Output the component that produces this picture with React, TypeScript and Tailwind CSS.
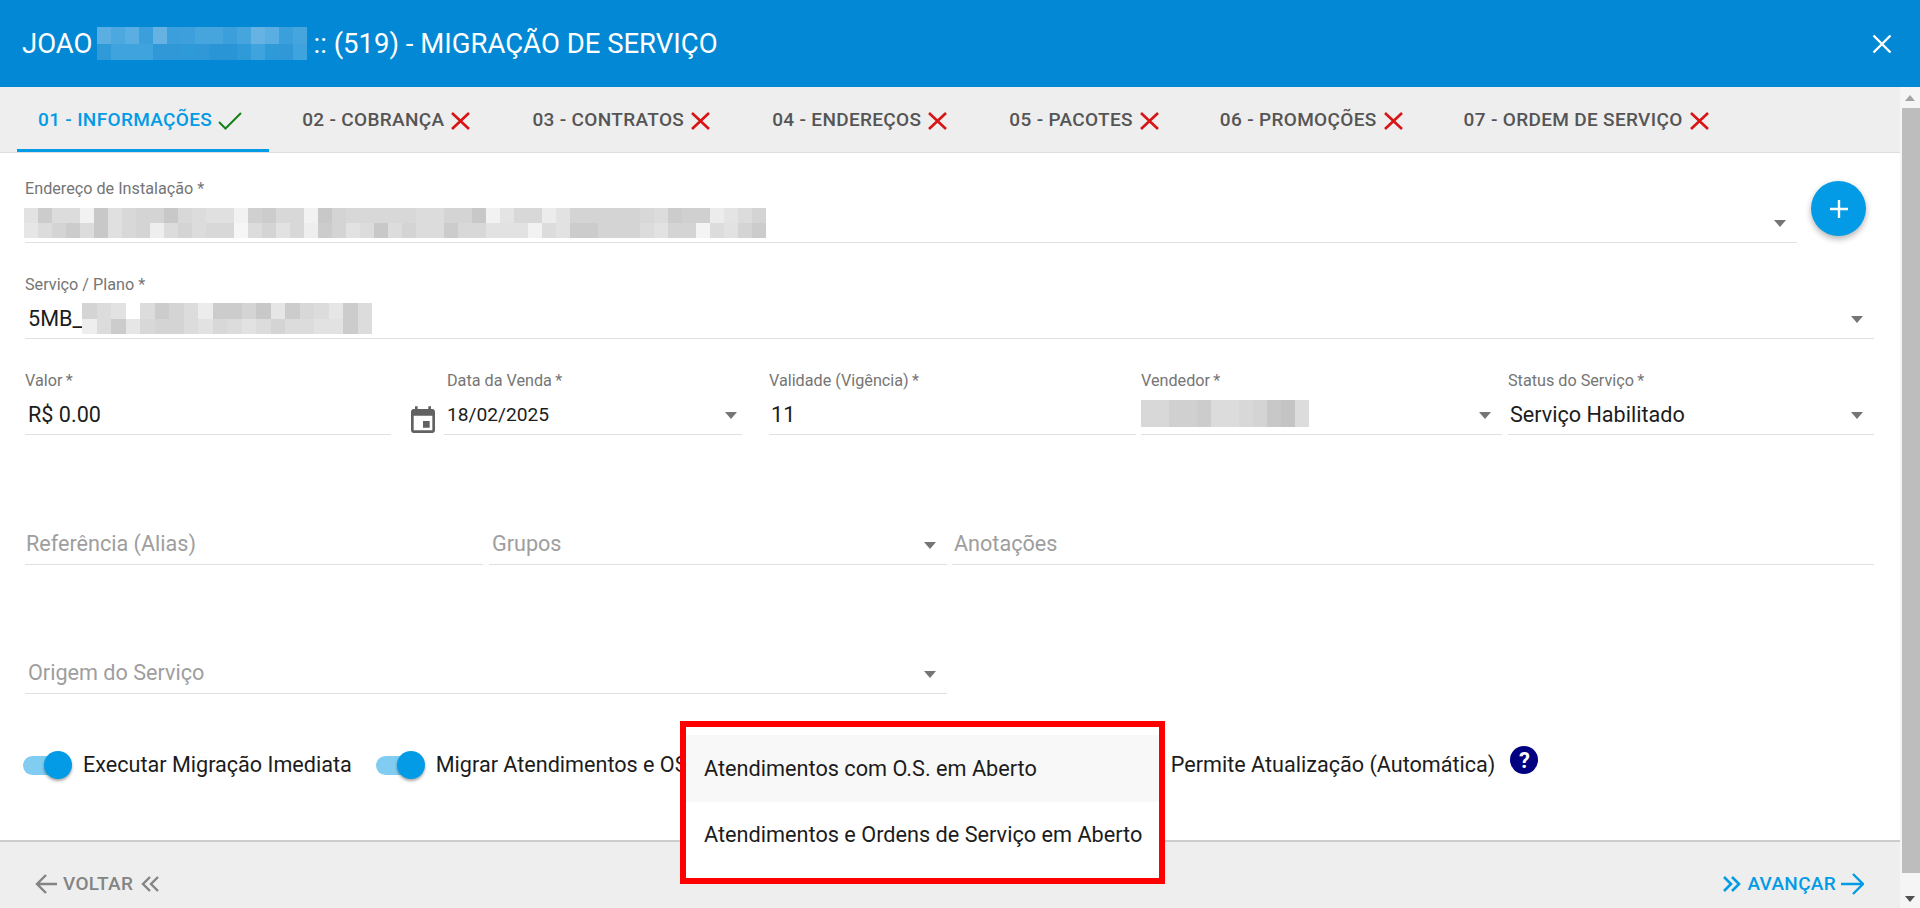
const tabs = [
  { label: '01 - INFORMAÇÕES', done: true, cls: 'ml-[17px] pl-[21px] pr-[27px] text-[#039be5] border-[#039be5]' },
  { label: '02 - COBRANÇA', done: false, cls: 'ml-[11px] pl-[22px] pr-[26px] text-[#555555] border-transparent' },
  { label: '03 - CONTRATOS', done: false, cls: 'ml-[14px] pl-[22px] pr-[26px] text-[#555555] border-transparent' },
  { label: '04 - ENDEREÇOS', done: false, cls: 'ml-[15px] pl-[21px] pr-[26px] text-[#555555] border-transparent' },
  { label: '05 - PACOTES', done: false, cls: 'ml-[14px] pl-[22px] pr-[26px] text-[#555555] border-transparent' },
  { label: '06 - PROMOÇÕES', done: false, cls: 'ml-[14px] pl-[21px] pr-[26px] text-[#555555] border-transparent' },
  { label: '07 - ORDEM DE SERVIÇO', done: false, cls: 'ml-[13px] pl-[22px] pr-[26px] text-[#555555] border-transparent' },
];

const titleMosaic = [
  '5aaee2 4ca8df 5aaee2 3b9fdb 66b3e3 3b9fdb 3da0dc 47a5de 47a5de 3b9fdb 47a5de 66b3e3 5aaee2 3b9fdb 47a5de',
  '2f9ad8 3fa3dd 3fa3dd 3fa3dd 3098d7 3098d7 2f9ad8 3098d7 2a95d6 2a95d6 2f9ad8 3fa3dd 2f9ad8 3098d7 3fa3dd',
];
const addressMosaic = [
  'e2 cc dc dc f2 c8 e0 d8 d4 d4 c8 d8 dc e0 e0 f2 d0 cc d8 d8 f2 c8 d4 d8 d8 d8 d8 d8 dc dc d4 d4 c8 f2 e4 d8 d8 ec e2 d4 d4 d4 d4 d4 d8 dc cc d0 d0 ec e4 dc d4',
  'e6 dc d4 cc dc c8 e0 d8 d4 ee dc d4 dc d8 d8 f6 dc d4 e2 d8 ee cc d4 e2 dc c8 dc d4 dc dc cc d8 d8 e2 e2 e2 f2 dc e2 cc cc d4 d4 d4 dc e2 d4 d4 f4 dc e2 d4 cc',
];
const planMosaic = [
  'd4 dc e2 ff dc cc d4 dc ec cc cc d4 c8 e6 cc d8 dc e6 cc dc',
  'ee dc cc e6 d8 d4 d4 dc e2 d8 dc e2 dc d4 dc dc e2 e2 cc dc',
];
const sellerMosaic = ['d8 d8 d0 d0 cc dc dc d8 d4 c8 c4 dc'];

function Mosaic({ rows, cell, height, gray = true }: { rows: string[]; cell: number; height: number; gray?: boolean }) {
  return (
    <div className="flex shrink-0 flex-col">
      {rows.map((row, i) => (
        <div className="flex" key={i}>
          {row.split(' ').map((c, j) => (
            <div
              key={j}
              style={{ width: cell, height, background: gray ? `#${c}${c}${c}` : `#${c}` }}
            />
          ))}
        </div>
      ))}
    </div>
  );
}

function Caret({ cls = 'mr-[11px]' }: { cls?: string }) {
  return (
    <svg className={`shrink-0 ${cls}`} width="12" height="7" viewBox="0 0 12 7">
      <path d="M0 0h12L6 7z" fill="#757575" />
    </svg>
  );
}

function Field({
  label,
  value,
  placeholder,
  caret,
  cls,
  labelCls = '',
  valueCls = 'pl-[3px]',
  caretCls,
  children,
}: {
  label?: string;
  value?: string;
  placeholder?: string;
  caret?: boolean;
  cls: string;
  labelCls?: string;
  valueCls?: string;
  caretCls?: string;
  children?: React.ReactNode;
}) {
  return (
    <div className={`flex h-[64px] shrink-0 flex-col border-b border-[#e0e0e0] ${cls}`}>
      <div className={`h-[20px] text-[16.2px] leading-[20px] text-[#757575] ${labelCls}`}>{label}</div>
      <div className="flex h-[43px] items-center pt-[5px]">
        <div className={`flex min-w-0 flex-1 items-center whitespace-nowrap text-[21.6px] text-[#1c1c1c] ${valueCls}`}>
          {value}
          {placeholder ? <span className="-mt-[2px] text-[#9e9e9e]">{placeholder}</span> : null}
          {children}
        </div>
        {caret ? <Caret cls={caretCls} /> : null}
      </div>
    </div>
  );
}

function Toggle({ cls }: { cls: string }) {
  return (
    <div className={`flex h-[19px] w-[45px] shrink-0 items-center justify-end rounded-full bg-[#81cdf2] ${cls}`}>
      <div className="-mr-[4px] h-[28px] w-[28px] shrink-0 rounded-full bg-[#039be5] shadow-[0_2px_3px_rgba(0,0,0,0.35)]" />
    </div>
  );
}

export default function App() {
  return (
    <div className="relative flex h-[908px] w-[1920px] flex-col overflow-hidden bg-white font-['Roboto',sans-serif]">
      <header className="flex h-[87px] shrink-0 items-center bg-[#0288d4] pl-[22px] pr-[28px] text-[27.5px] text-white">
        <span>JOAO</span>
        <div className="ml-[4px] mr-[7px]">
          <Mosaic rows={titleMosaic} cell={14} height={16.5} gray={false} />
        </div>
        <span>:: (519) - MIGRAÇÃO DE SERVIÇO</span>
        <svg className="ml-auto" width="20" height="20" viewBox="0 0 20 20">
          <path d="M1.5 1.5l17 17M18.5 1.5l-17 17" stroke="#fff" strokeWidth="2.4" fill="none" />
        </svg>
      </header>

      <div className="flex min-h-0 flex-1">
        <div className="flex w-[1900px] shrink-0 flex-col">
          <nav className="flex h-[66px] shrink-0 items-stretch border-b border-[#dddddd] bg-[#eeeeee]">
            {tabs.map((tab) => (
              <div
                className={`flex items-center whitespace-nowrap border-b-[3px] pt-[5px] text-[19px] font-medium tracking-[0.33px] ${tab.cls}`}
                key={tab.label}
              >
                {tab.label}
                {tab.done ? (
                  <svg className="ml-[6px]" width="24" height="18" viewBox="0 0 24 18">
                    <path d="M1 10l6.5 6.5L23 1" stroke="#16801a" strokeWidth="2" fill="none" />
                  </svg>
                ) : (
                  <svg className="ml-[7px]" width="19" height="18" viewBox="0 0 19 18">
                    <path d="M1 1l17 16M18 1L1 17" stroke="#d81414" strokeWidth="2.6" fill="none" />
                  </svg>
                )}
              </div>
            ))}
          </nav>

          <main className="flex h-[687px] shrink-0 flex-col pl-[25px] pt-[26px]">
            <div className="flex items-start">
              <Field label="Endereço de Instalação *" caret cls="w-[1772px]" valueCls="-ml-[1px]">
                <Mosaic rows={addressMosaic} cell={14} height={15} />
              </Field>
              <button
                className="ml-[14px] mt-[2px] flex h-[55px] w-[55px] shrink-0 items-center justify-center rounded-full bg-[#039be5] shadow-[0_3px_6px_rgba(0,0,0,0.3)]"
                type="button"
              >
                <svg width="20" height="20" viewBox="0 0 20 20">
                  <path d="M10 1v18M1 10h18" stroke="#fff" strokeWidth="2.4" fill="none" />
                </svg>
              </button>
            </div>

            <div className="mt-[32px] flex">
              <Field label="Serviço / Plano *" caret cls="w-[1849px]" value="5MB_">
                <Mosaic rows={planMosaic} cell={14.5} height={15.5} />
              </Field>
            </div>

            <div className="mt-[32px] flex items-start">
              <Field label={'Valor\u2009*'} value="R$ 0.00" cls="w-[366px]" />
              <svg className="ml-[16px] mr-[5px] mt-[34px] shrink-0" width="32" height="32" viewBox="0 0 24 24">
                <path
                  d="M17 12h-5v5h5v-5zM16 1v2H8V1H6v2H5c-1.11 0-1.99.9-1.99 2L3 19c0 1.1.89 2 2 2h14c1.1 0 2-.9 2-2V5c0-1.1-.9-2-2-2h-1V1h-2zm3 18H5V8h14v11z"
                  fill="#616161"
                />
              </svg>
              <Field
                label={'Data da Venda\u2009*'}
                value="18/02/2025"
                cls="w-[298px]"
                labelCls="pl-[3px]"
                valueCls="pl-[3px] !text-[19.2px]"
                caret
                caretCls="mr-[5px]"
              />
              <Field label={'Validade (Vigência)\u2009*'} value="11" cls="ml-[27px] w-[367px]" valueCls="pl-[2px]" />
              <Field label={'Vendedor\u2009*'} caret cls="ml-[5px] w-[361px]" valueCls="pb-[3px]">
                <Mosaic rows={sellerMosaic} cell={14} height={27} />
              </Field>
              <Field label={'Status do Serviço\u2009*'} value="Serviço Habilitado" caret cls="ml-[6px] w-[366px]" valueCls="pl-[2px]" />
            </div>

            <div className="mt-[64px] flex items-start">
              <Field placeholder="Referência (Alias)" cls="w-[458px]" valueCls="pl-[1px]" />
              <Field placeholder="Grupos" caret cls="ml-[6px] w-[458px]" valueCls="pl-[3px]" />
              <Field placeholder="Anotações" cls="ml-[5px] w-[922px]" valueCls="pl-[2px]" />
            </div>

            <div className="mt-[65px] flex">
              <Field placeholder="Origem do Serviço" caret cls="w-[922px]" />
            </div>

            <div className="ml-[-2px] mt-[51px] flex h-[40px] items-center text-[21.6px] text-[#1c1c1c]">
              <Toggle cls="" />
              <span className="ml-[15px] whitespace-nowrap">Executar Migração Imediata</span>
              <Toggle cls="ml-[24px]" />
              <span className="ml-[15px] w-[735px] whitespace-nowrap">Migrar Atendimentos e OS</span>
              <span className="whitespace-nowrap">Permite Atualização (Automática)</span>
              <div className="ml-[15px] -mt-[10px] flex h-[28px] w-[28px] shrink-0 items-center justify-center rounded-full bg-[#000080] text-[22px] font-bold text-white">
                ?
              </div>
            </div>
          </main>

          <footer className="flex h-[68px] shrink-0 items-center justify-between border-t-2 border-[#cccccc] bg-[#eeeeee] pl-[35px] pr-[36px] pt-[18px] text-[19px] font-medium tracking-[0.3px]">
            <div className="flex items-center text-[#848484]">
              <svg width="22" height="20" viewBox="0 0 22 20">
                <path d="M22 10H2M11 1l-9 9 9 9" stroke="#848484" strokeWidth="2.4" fill="none" />
              </svg>
              <span className="ml-[6px]">VOLTAR</span>
              <svg className="ml-[8px]" width="19" height="16" viewBox="0 0 19 16">
                <path d="M9 1L2 8l7 7M17 1l-7 7 7 7" stroke="#848484" strokeWidth="2.4" fill="none" />
              </svg>
            </div>
            <div className="flex items-center text-[#039be5]">
              <svg width="19" height="16" viewBox="0 0 19 16">
                <path d="M2 1l7 7-7 7M10 1l7 7-7 7" stroke="#039be5" strokeWidth="2.6" fill="none" />
              </svg>
              <span className="ml-[6px]">AVANÇAR</span>
              <svg className="ml-[5px]" width="23" height="22" viewBox="0 0 23 22">
                <path d="M0 11h21M12 1l10 10-10 10" stroke="#039be5" strokeWidth="2.4" fill="none" />
              </svg>
            </div>
          </footer>
        </div>

        <div className="flex w-[20px] shrink-0 flex-col items-center bg-[#f5f5f5]">
          <svg className="mt-[8px]" width="10" height="6" viewBox="0 0 10 6">
            <path d="M5 0l5 6H0z" fill="#a3a3a3" />
          </svg>
          <div className="ml-[1px] mt-[7px] h-[765px] w-[18px] bg-[#bdbdbd]" />
          <svg className="mt-[23px]" width="10" height="6" viewBox="0 0 10 6">
            <path d="M0 0h10L5 6z" fill="#505050" />
          </svg>
        </div>
      </div>

      <div className="absolute left-[680px] top-[721px] h-[163px] w-[485px] border-[6px] border-[#ff0000] bg-white py-[8px] text-[21.7px] text-[#1c1c1c]">
        <div className="flex h-[67px] items-center bg-[#f8f8f8] pl-[18px] pt-[2px]">Atendimentos com O.S. em Aberto</div>
        <div className="flex h-[67px] items-center pl-[18px]">Atendimentos e Ordens de Serviço em Aberto</div>
      </div>
    </div>
  );
}
